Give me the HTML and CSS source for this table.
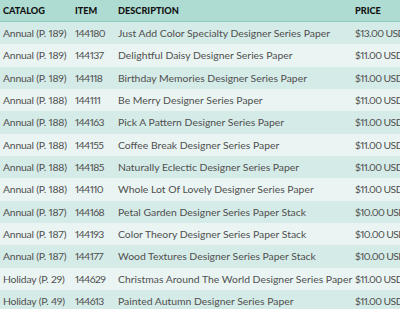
FILE: index.html
```html
<!DOCTYPE html>
<html>
<head>
<meta charset="utf-8">
<link rel="stylesheet" href="styles.css">
</head>
<body>
<table class="catalog">
  <colgroup>
    <col class="c-cat"><col class="c-item"><col class="c-desc"><col class="c-price">
  </colgroup>
  <thead>
    <tr><th>Catalog</th><th>Item</th><th>Description</th><th>Price</th></tr>
  </thead>
  <tbody>
    <tr><td>Annual (P. 189)</td><td>144180</td><td>Just Add Color Specialty Designer Series Paper</td><td>$13.00 USD/</td></tr>
    <tr><td>Annual (P. 189)</td><td>144137</td><td>Delightful Daisy Designer Series Paper</td><td>$11.00 USD/</td></tr>
    <tr><td>Annual (P. 189)</td><td>144118</td><td>Birthday Memories Designer Series Paper</td><td>$11.00 USD/</td></tr>
    <tr><td>Annual (P. 188)</td><td>144111</td><td>Be Merry Designer Series Paper</td><td>$11.00 USD/</td></tr>
    <tr><td>Annual (P. 188)</td><td>144163</td><td>Pick A Pattern Designer Series Paper</td><td>$11.00 USD/</td></tr>
    <tr><td>Annual (P. 188)</td><td>144155</td><td>Coffee Break Designer Series Paper</td><td>$11.00 USD/</td></tr>
    <tr><td>Annual (P. 188)</td><td>144185</td><td>Naturally Eclectic Designer Series Paper</td><td>$11.00 USD/</td></tr>
    <tr><td>Annual (P. 188)</td><td>144110</td><td>Whole Lot Of Lovely Designer Series Paper</td><td>$11.00 USD/</td></tr>
    <tr><td>Annual (P. 187)</td><td>144168</td><td>Petal Garden Designer Series Paper Stack</td><td>$10.00 USD/</td></tr>
    <tr><td>Annual (P. 187)</td><td>144193</td><td>Color Theory Designer Series Paper Stack</td><td>$10.00 USD/</td></tr>
    <tr><td>Annual (P. 187)</td><td>144177</td><td>Wood Textures Designer Series Paper Stack</td><td>$10.00 USD/</td></tr>
    <tr><td>Holiday (P. 29)</td><td>144629</td><td>Christmas Around The World Designer Series Paper</td><td>$11.00 USD/</td></tr>
    <tr><td>Holiday (P. 49)</td><td>144613</td><td>Painted Autumn Designer Series Paper</td><td>$11.00 USD/</td></tr>
  </tbody>
</table>
</body>
</html>
```

FILE: styles.css
```css
html, body {
  margin: 0;
  padding: 0;
  overflow: hidden;
  background: #ffffff;
}
body {
  width: 400px;
  height: 309px;
}
.catalog {
  border-collapse: collapse;
  table-layout: fixed;
  width: 460px;
  font-family: Lato, "Open Sans", sans-serif;
  font-size: 10.4px;
  font-variant-numeric: proportional-nums;
  color: #4f4f4f;
}
.c-cat { width: 72px; }
.c-item { width: 43px; }
.c-desc { width: 237px; }
.c-price { width: 108px; }
.catalog th {
  background: #aedcd2;
  color: #111;
  font-size: 9.2px;
  font-weight: 900;
  text-transform: uppercase;
  text-align: left;
  height: 21px;
  padding: 0 3px;
  border-bottom: 1px solid #8ccdc2;
  white-space: nowrap;
}
.catalog td {
  height: 22.33px;
  padding: 0 0 0 3px;
  white-space: nowrap;
}
.catalog td:nth-child(1) { letter-spacing: -0.2px; }
.catalog td:nth-child(2),
.catalog td:nth-child(4) { letter-spacing: -0.6px; }
.catalog tbody tr:nth-child(odd) { background: #d5ebe7; }
.catalog tbody tr:nth-child(even) { background: #eaf5f3; }
```
